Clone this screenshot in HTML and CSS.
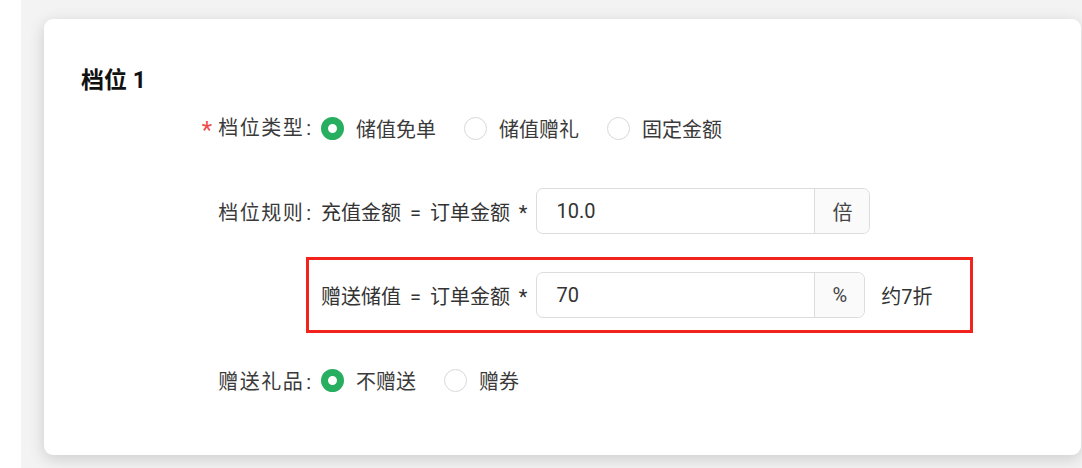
FILE: index.html
```html
<!DOCTYPE html>
<html lang="zh-CN">
<head>
<meta charset="utf-8">
<title>档位</title>
<link rel="stylesheet" href="styles.css">
</head>
<body>
<div class="page">
  <div class="main">
    <div class="card">
      <div class="title">档位 1</div>
      <div class="form">
        <div class="row">
          <div class="label"><span class="req">*</span><span class="label-text">档位类型</span><span class="colon">:</span></div>
          <div class="content">
            <label class="radio-item"><span class="radio checked"></span><span class="radio-text">储值免单</span></label>
            <label class="radio-item"><span class="radio"></span><span class="radio-text">储值赠礼</span></label>
            <label class="radio-item"><span class="radio"></span><span class="radio-text">固定金额</span></label>
          </div>
        </div>
        <div class="row row-rule">
          <div class="label"><span class="label-text">档位规则</span><span class="colon">:</span></div>
          <div class="content">
            <span class="expr">充值金额 = 订单金额 *</span>
            <div class="input-group">
              <div class="input">10.0</div>
              <div class="addon">倍</div>
            </div>
          </div>
        </div>
        <div class="row row-gift-value">
          <div class="label"></div>
          <div class="content">
            <div class="highlight">
              <span class="expr">赠送储值 = 订单金额 *</span>
              <div class="input-group">
                <div class="input">70</div>
                <div class="addon">%</div>
              </div>
              <span class="hint">约7折</span>
            </div>
          </div>
        </div>
        <div class="row row-gift">
          <div class="label"><span class="label-text">赠送礼品</span><span class="colon">:</span></div>
          <div class="content">
            <label class="radio-item"><span class="radio checked"></span><span class="radio-text">不赠送</span></label>
            <label class="radio-item"><span class="radio"></span><span class="radio-text">赠券</span></label>
          </div>
        </div>
      </div>
    </div>
  </div>
</div>
</body>
</html>
```

FILE: styles.css
```css
* { box-sizing: border-box; }
html, body { margin: 0; padding: 0; }
body {
  font-family: Roboto, "Noto Sans CJK SC", sans-serif;
  color: #333;
  background: #fff;
}
.page {
  width: 1082px;
  height: 468px;
  overflow: hidden;
  background: #fff;
  padding-left: 21px;
}
.main {
  height: 100%;
  background: #f3f3f3;
  padding: 19px 1px 0 23px;
}
.card {
  background: #fff;
  border-radius: 9px;
  box-shadow: 0 4px 16px rgba(0, 0, 0, 0.16);
  padding: 47px 0 52px 37px;
}
.title {
  font-size: 23px;
  font-weight: 700;
  line-height: 30px;
  color: #111;
  margin-bottom: 9px;
}
.form {
  margin-left: 80px;
  display: flex;
  flex-direction: column;
}
.row {
  display: flex;
  align-items: center;
  font-size: 20px;
  min-height: 46px;
  margin-bottom: 37px;
}
.row-rule { margin-bottom: 23px; }
.row-gift-value { margin-bottom: 24px; }
.row-gift { margin-bottom: 0; }
.label {
  width: 150px;
  flex: none;
  text-align: right;
  color: #3a3a3a;
  white-space: nowrap;
}
.label-text { letter-spacing: 1.5px; }
.colon { margin-left: 2px; }
.req {
  color: #f04a4a;
  font-size: 24px;
  vertical-align: -3px;
  margin-right: 6px;
}
.content {
  display: flex;
  align-items: center;
  margin-left: 10px;
  white-space: nowrap;
}
.radio-item {
  display: flex;
  align-items: center;
  margin-right: 28px;
}
.radio {
  width: 23px;
  height: 23px;
  border-radius: 50%;
  border: 1px solid #d8d8d8;
  background: #fff;
  flex: none;
}
.radio.checked {
  border: 7.5px solid #27ae60;
}
.radio-text {
  margin-left: 12px;
  color: #3a3a3a;
}
.expr {
  color: #333;
  word-spacing: 4px;
  margin-right: 9px;
}
.input-group {
  display: flex;
  height: 46px;
  border: 1px solid #dcdcdc;
  border-radius: 7px;
}
.input {
  width: 277px;
  padding-left: 19px;
  display: flex;
  align-items: center;
  color: #333;
}
.addon {
  display: flex;
  align-items: center;
  padding: 0 17px;
  background: #fafafa;
  border-left: 1px solid #dcdcdc;
  border-radius: 0 7px 7px 0;
  color: #444;
}
.highlight {
  display: flex;
  align-items: center;
  margin-left: -15px;
  width: 667px;
  border: 3px solid #f2231d;
  padding: 12px 0 12px 12px;
}
.hint {
  margin-left: 16px;
  color: #333;
}
```
